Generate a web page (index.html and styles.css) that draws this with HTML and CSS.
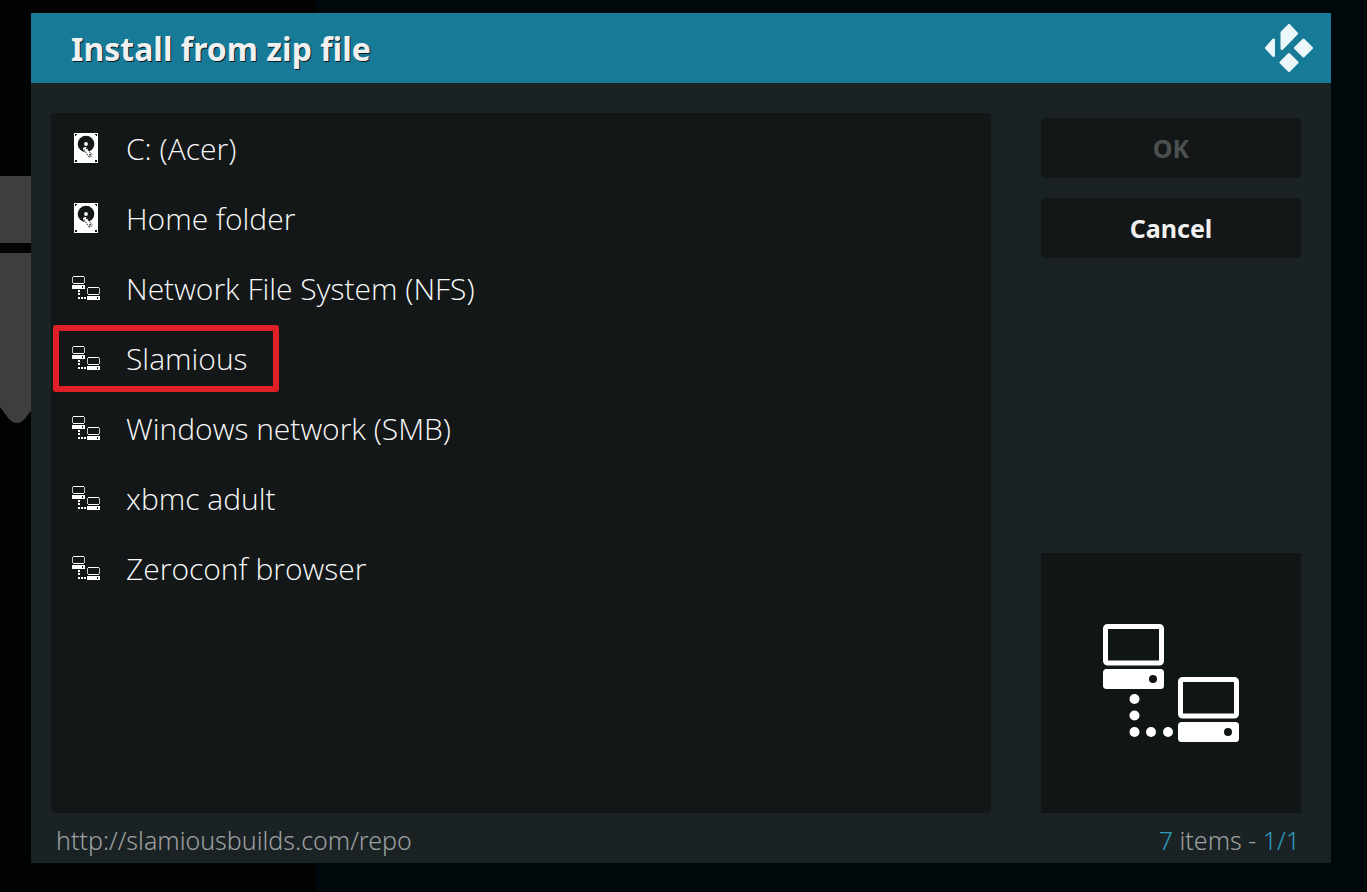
FILE: index.html
```
<!DOCTYPE html>
<html lang="en">
  <head>
    <meta charset="utf-8" />
    <meta name="viewport" content="width=device-width, initial-scale=1" />
    <title>Install from zip file</title>
    <link rel="stylesheet" href="styles.css">
  </head>
  <body>
    <svg class="defs" aria-hidden="true">
      <symbol id="icon-disk" viewBox="0 0 24 30">
        <rect width="24" height="30" fill="#fff"/>
        <path d="M1 1h2v1H2v1H1zM21 1h2v2h-1V2h-1zM1 27h2v2H1zM21 27h2v2h-2z" fill="#131718"/>
        <circle cx="12" cy="11" r="8.3" fill="#131718"/>
        <circle cx="12" cy="11" r="1.9" fill="#fff"/>
        <path d="M11 16L16.500 22.500" stroke="#fff" stroke-width="4" stroke-linecap="round"/>
        <path d="M10 16.500L14.500 23.500M12 15L18 21.500" stroke="#131718" stroke-width="1" stroke-dasharray="1.500 1"/>
        <path d="M14.500 23.500q2.500 2 3.500-2" fill="none" stroke="#131718" stroke-width="1" stroke-dasharray="1.500 1"/>
        <circle cx="16" cy="21.800" r=".9" fill="#131718"/>
      </symbol>
      <symbol id="icon-net-small" viewBox="0 0 28 24">
        <path d="M1 0h11v1H1zM1 7h11v1H1zM16 11h11v1H16zM16 18h11v1H16zM0 9h13v4H0zM15 20h13v4H15z" fill="#fff"/>
        <path d="M0 1h1v6H0zM12 1h1v6h-1zM15 12h1v6h-1zM27 12h1v6h-1z" fill="#c4c6c6"/>
        <path d="M10 10h1v2h-1zM25 21h1v2h-1z" fill="#131718"/>
        <path d="M6 14h2v2H6zM6 17h2v2H6zM6 21h2v2H6zM9 21h2v2H9zM12 21h2v2h-2z" fill="#fff"/>
      </symbol>
      <symbol id="icon-net" viewBox="0 0 136 118">
        <g id="computer">
          <rect x="2.5" y="2.5" width="56" height="36.5" rx="2" fill="none" stroke="#fff" stroke-width="5"/>
          <rect y="45" width="61" height="20" rx="3.5" fill="#fff"/>
          <circle cx="50" cy="55" r="4" fill="#101515"/>
        </g>
        <use href="#computer" x="75" y="53"/>
        <g fill="#fff">
          <circle cx="31.5" cy="75" r="5"/>
          <circle cx="31.5" cy="91.5" r="5"/>
          <circle cx="31.5" cy="108" r="5"/>
          <circle cx="48" cy="108" r="5"/>
          <circle cx="65" cy="108" r="5"/>
        </g>
      </symbol>
    </svg>

    <svg class="backdrop" viewBox="0 0 31 250" aria-hidden="true">
      <path d="M0 1h31v67H0zM0 78h31v158C26 241 24 248 17 248S7 241 0 232z" fill="#3e3e3e"/>
    </svg>

    <main class="dialog">
      <header class="dialog-header">
        <h1>Install from zip file</h1>
        <svg class="logo" viewBox="0 0 48 48" aria-label="Kodi">
          <g fill="#ecf7fa" stroke="#ecf7fa" stroke-width="3" stroke-linejoin="round">
            <path d="M24 1.5L31.500 9.500L17 24.500V8.500z"/>
            <path d="M8.500 16V31.500L1.500 24z"/>
            <path d="M38.500 16L46.500 24L38.500 32L30.500 24z"/>
            <path d="M24 30.500L32 38.500L24 46.500L16 38.500z"/>
          </g>
        </svg>
      </header>

      <div class="dialog-content">
        <ul class="file-list">
          <li><a href="#"><svg class="disk"><use href="#icon-disk"/></svg><span>C: (Acer)</span></a></li>
          <li><a href="#"><svg class="disk"><use href="#icon-disk"/></svg><span>Home folder</span></a></li>
          <li><a href="#"><svg class="net"><use href="#icon-net-small"/></svg><span>Network File System (NFS)</span></a></li>
          <li class="marked"><a href="#"><svg class="net"><use href="#icon-net-small"/></svg><span>Slamious</span></a></li>
          <li><a href="#"><svg class="net"><use href="#icon-net-small"/></svg><span>Windows network (SMB)</span></a></li>
          <li><a href="#"><svg class="net"><use href="#icon-net-small"/></svg><span>xbmc adult</span></a></li>
          <li><a href="#"><svg class="net"><use href="#icon-net-small"/></svg><span>Zeroconf browser</span></a></li>
        </ul>
        <aside class="side">
          <button type="button" disabled>OK</button>
          <button type="button">Cancel</button>
          <div class="preview">
            <svg><use href="#icon-net"/></svg>
          </div>
        </aside>
      </div>

      <footer class="dialog-footer">
        <span>http://slamiousbuilds.com/repo</span>
        <span><b>7</b> items - <b>1/1</b></span>
      </footer>
    </main>
  </body>
</html>
```
FILE: styles.css
```
*, *::after {
  box-sizing: border-box;
}
body {
  margin: 0;
  min-height: 100vh;
  padding: 13px 36px 29px 31px;
  display: flex;
  background: linear-gradient(to right, #010303 316px, #01080b 316px);
  font-family: "Noto Sans", "Open Sans", sans-serif;
  color: #f0f0f0;
}
.defs {
  position: absolute;
  width: 0;
  height: 0;
}
/* menu shape showing from behind the dialog */
.backdrop {
  position: absolute;
  left: 0;
  top: 175px;
  width: 31px;
  height: 250px;
}
.dialog {
  flex: 1;
  display: flex;
  flex-direction: column;
  background-color: #1b2224;
}
.dialog-header {
  display: flex;
  align-items: center;
  justify-content: space-between;
  height: 70px;
  padding: 0 18px 0 40px;
  background-color: #177a96;
}
h1 {
  margin: 0;
  padding-top: 2px;
  font-size: 32px;
  font-weight: 700;
  line-height: 40px;
  text-shadow: 1px 1px 0 #0a1c22;
}
.logo {
  width: 48px;
  height: 48px;
}
.dialog-content {
  flex: 1;
  display: flex;
  gap: 50px;
  padding: 30px 30px 0 20px;
}
.file-list {
  flex: 1;
  margin: 0;
  padding: 0;
  list-style: none;
  background-color: #131718;
  border-radius: 4px;
}
.file-list li {
  position: relative;
}
.file-list a {
  display: flex;
  align-items: center;
  gap: 26px;
  height: 70px;
  padding: 0 21px;
  color: #f8f8f8;
  font-family: "Open Sans", "Noto Sans", sans-serif;
  font-size: 30px;
  font-weight: 300;
  line-height: 40px;
  text-decoration: none;
}
.file-list span {
  padding-top: 2px;
}
.file-list svg {
  width: 28px;
  height: 30px;
}
.file-list .net {
  height: 24px;
  shape-rendering: crispEdges;
}
.marked::after {
  content: "";
  position: absolute;
  left: 2px;
  top: 2px;
  width: 226px;
  height: 67px;
  border: 6px solid #df2027;
  border-radius: 3px;
}
.side {
  width: 260px;
  padding-top: 5px;
  display: flex;
  flex-direction: column;
  gap: 20px;
}
button {
  height: 60px;
  border: 0;
  border-radius: 4px;
  background-color: #131718;
  color: #f0f0f0;
  font-family: inherit;
  font-size: 25px;
  font-weight: 700;
}
button:disabled {
  color: #4d5051;
}
.preview {
  display: flex;
  align-items: center;
  justify-content: center;
  height: 260px;
  margin-top: auto;
  background-color: #101515;
}
.preview svg {
  width: 136px;
  height: 118px;
}
.dialog-footer {
  display: flex;
  align-items: center;
  justify-content: space-between;
  height: 50px;
  padding: 4px 31px 0 25px;
  color: #9da0a1;
  font-size: 25px;
  font-weight: 300;
  line-height: 34px;
}
.dialog-footer b {
  color: #2c9cbe;
  font-weight: 300;
}
```
